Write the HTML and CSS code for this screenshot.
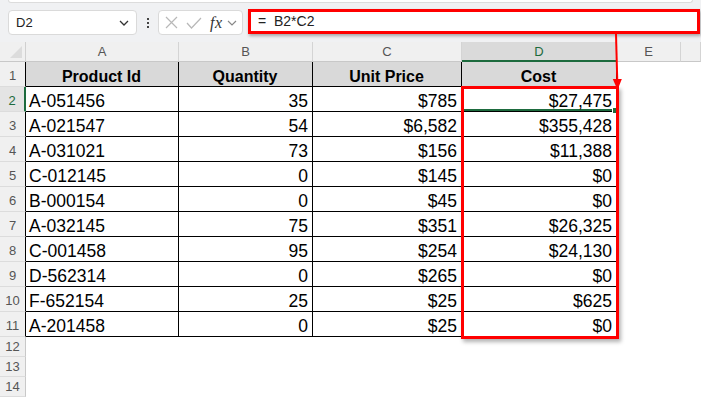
FILE: index.html
```html
<!DOCTYPE html>
<html lang="en">
<head>
    <meta charset="UTF-8">
    <meta name="viewport" content="width=device-width, initial-scale=1.0">
    <title>Cost = Quantity * Unit Price</title>
    <link rel="stylesheet" href="styles.css">
</head>
<body>
<div class="page">
    <div class="topbar">
        <div class="ribbon-edge"></div>
        <div class="formula-row">
            <div class="name-box">
                <span>D2</span>
                <svg class="chev" width="10" height="6" viewBox="0 0 10 6"><path d="M1 1 L5 5 L9 1" fill="none" stroke="#333" stroke-width="1.3"/></svg>
            </div>
            <div class="dots"><i></i><i></i><i></i></div>
            <div class="fx-box">
                <svg width="13" height="13" viewBox="0 0 13 13"><path d="M1 1 L12 12 M12 1 L1 12" stroke="#b8b8b8" stroke-width="1.2"/></svg>
                <svg width="16" height="12" viewBox="0 0 16 12"><path d="M1 6 L5.5 11 L15 1" fill="none" stroke="#b8b8b8" stroke-width="1.2"/></svg>
                <span class="fx">fx</span>
                <svg class="chev" width="10" height="6" viewBox="0 0 10 6"><path d="M1 1 L5 5 L9 1" fill="none" stroke="#888" stroke-width="1.2"/></svg>
            </div>
            <div class="formula">=&nbsp;&nbsp;B2*C2</div>
        </div>
    </div>

    <div class="sheet">
        <div class="corner"></div>
        <div class="ch">A</div>
        <div class="ch">B</div>
        <div class="ch">C</div>
        <div class="ch sel">D</div>
        <div class="ch">E</div>
        <div class="ch"></div>

        <div class="rh">1</div>
        <div class="c head">Product Id</div>
        <div class="c head">Quantity</div>
        <div class="c head">Unit Price</div>
        <div class="c head">Cost</div>
        <div class="e"></div><div class="e"></div>

        <div class="rh sel">2</div>
        <div class="c">A-051456</div>
        <div class="c num">35</div>
        <div class="c num">$785</div>
        <div class="c num active">$27,475</div>
        <div class="e"></div><div class="e"></div>

        <div class="rh">3</div>
        <div class="c">A-021547</div>
        <div class="c num">54</div>
        <div class="c num">$6,582</div>
        <div class="c num">$355,428</div>
        <div class="e"></div><div class="e"></div>

        <div class="rh">4</div>
        <div class="c">A-031021</div>
        <div class="c num">73</div>
        <div class="c num">$156</div>
        <div class="c num">$11,388</div>
        <div class="e"></div><div class="e"></div>

        <div class="rh">5</div>
        <div class="c">C-012145</div>
        <div class="c num">0</div>
        <div class="c num">$145</div>
        <div class="c num">$0</div>
        <div class="e"></div><div class="e"></div>

        <div class="rh">6</div>
        <div class="c">B-000154</div>
        <div class="c num">0</div>
        <div class="c num">$45</div>
        <div class="c num">$0</div>
        <div class="e"></div><div class="e"></div>

        <div class="rh">7</div>
        <div class="c">A-032145</div>
        <div class="c num">75</div>
        <div class="c num">$351</div>
        <div class="c num">$26,325</div>
        <div class="e"></div><div class="e"></div>

        <div class="rh">8</div>
        <div class="c">C-001458</div>
        <div class="c num">95</div>
        <div class="c num">$254</div>
        <div class="c num">$24,130</div>
        <div class="e"></div><div class="e"></div>

        <div class="rh">9</div>
        <div class="c">D-562314</div>
        <div class="c num">0</div>
        <div class="c num">$265</div>
        <div class="c num">$0</div>
        <div class="e"></div><div class="e"></div>

        <div class="rh">10</div>
        <div class="c">F-652154</div>
        <div class="c num">25</div>
        <div class="c num">$25</div>
        <div class="c num">$625</div>
        <div class="e"></div><div class="e"></div>

        <div class="rh">11</div>
        <div class="c">A-201458</div>
        <div class="c num">0</div>
        <div class="c num">$25</div>
        <div class="c num">$0</div>
        <div class="e"></div><div class="e"></div>

        <div class="rh short">12</div>
        <div class="e"></div><div class="e"></div><div class="e"></div><div class="e"></div><div class="e"></div><div class="e"></div>
        <div class="rh short">13</div>
        <div class="e"></div><div class="e"></div><div class="e"></div><div class="e"></div><div class="e"></div><div class="e"></div>
        <div class="rh short">14</div>
        <div class="e"></div><div class="e"></div><div class="e"></div><div class="e"></div><div class="e"></div><div class="e"></div>
    </div>

    <!-- annotation over the sheet -->
    <div class="highlight"></div>
    <svg class="arrow" width="701" height="100" viewBox="0 0 701 100">
        <path d="M616 34 L617.3 82" stroke="#f00" stroke-width="2"/>
        <polygon points="612.8,79 621.8,79 617.5,90" fill="#f00"/>
    </svg>
</div>
</body>
</html>
```

FILE: styles.css
```css
body {
    margin: 0;
    background: #fff;
    font-family: "Liberation Sans", Arial, sans-serif;
    color: #000;
}
.page {
    position: relative;
    width: 701px;
    height: 397px;
    overflow: hidden;
}
.topbar {
    height: 42px;
    background: #f0f1f3;
}
.ribbon-edge {
    height: 2px;
    margin: 0 8px;
    background: #fff;
    border: 1px solid #dcdcdc;
    border-top: none;
    border-radius: 0 0 5px 5px;
}
.formula-row {
    display: flex;
    align-items: flex-start;
    margin-top: 7px;
    padding-left: 8px;
}
.name-box {
    box-sizing: border-box;
    width: 129px;
    height: 25px;
    background: #fff;
    border: 1px solid #dadada;
    border-radius: 4px;
    display: flex;
    align-items: center;
    justify-content: space-between;
    padding: 0 7px 0 7px;
    font-size: 13px;
    color: #222;
}
.dots {
    width: 21px;
    height: 25px;
    display: flex;
    flex-direction: column;
    align-items: center;
    justify-content: center;
    gap: 2px;
}
.dots i {
    width: 2px;
    height: 2px;
    background: #444;
}
.fx-box {
    box-sizing: border-box;
    width: 85px;
    height: 25px;
    background: #fff;
    border: 1px solid #dadada;
    border-radius: 4px;
    display: flex;
    align-items: center;
    padding: 0 2px 0 6px;
    gap: 8px;
}
.fx-box .chev {
    margin-left: -4px;
}
.fx {
    font-family: "Liberation Serif", serif;
    font-style: italic;
    font-size: 16px;
    color: #333;
    letter-spacing: 0.5px;
}
.formula {
    box-sizing: border-box;
    width: 452px;
    height: 25px;
    margin-left: 5px;
    margin-top: -1px;
    background: #fff;
    border: 3px solid #f00;
    box-shadow: 1px 2px 3px rgba(0, 0, 0, 0.3);
    padding-left: 7px;
    font-size: 14px;
    line-height: 19px;
    color: #222;
}

.sheet {
    display: grid;
    grid-template-columns: 26px 153px 134px 149px 155px 64px 1fr;
    grid-template-rows: 20px repeat(11, 25px) repeat(3, 20px);
}
.sheet > div {
    box-sizing: border-box;
}
.corner {
    background: #f0f0f0;
    border-right: 1px solid #d0d0d0;
    border-bottom: 1px solid #c8c8c8;
    position: relative;
}
.corner::after {
    content: "";
    position: absolute;
    right: 3px;
    bottom: 3px;
    border-left: 12px solid transparent;
    border-bottom: 12px solid #dcdcdc;
}
.ch {
    background: #f0f0f0;
    border-right: 1px solid #d4d4d4;
    border-bottom: 1px solid #c8c8c8;
    font-size: 13px;
    color: #555;
    text-align: center;
    line-height: 19px;
}
.ch.sel {
    background: #dadada;
    color: #1d6b3e;
    border-bottom: 2px solid #1d6b3e;
}
.rh {
    background: #f0f0f0;
    border-right: 1px solid #000;
    border-bottom: 1px solid #dcdcdc;
    font-size: 13px;
    color: #555;
    text-align: center;
    display: flex;
    align-items: flex-end;
    justify-content: center;
    padding-bottom: 3px;
}
.rh.sel {
    color: #1d6b3e;
    background: #e4e4e4;
    border-right: 2px solid #1d6b3e;
}
.rh.short {
    border-right-color: #c8c8c8;
    padding-bottom: 2px;
}
.c {
    border-right: 1px solid #000;
    border-bottom: 1px solid #000;
    font-size: 17.5px;
    line-height: 19px;
    display: flex;
    align-items: flex-end;
    padding: 0 4px 0 3px;
    white-space: nowrap;
}
.c.num {
    justify-content: flex-end;
}
.c.head {
    background: #d9d9d9;
    font-weight: bold;
    font-size: 16px;
    line-height: 18px;
    justify-content: center;
}
.c.active {
    position: relative;
    box-shadow: inset 0 -2px 0 #1d6b3e;
}
.c.active::after {
    content: "";
    position: absolute;
    right: -3px;
    bottom: -3px;
    width: 5px;
    height: 5px;
    background: #1d6b3e;
    border: 1px solid #fff;
}
.e {
    background: #fff;
}

.highlight {
    position: absolute;
    left: 461px;
    top: 86px;
    width: 158px;
    height: 253px;
    box-sizing: border-box;
    border: 3px solid #f00;
    box-shadow: 2px 3px 4px rgba(0, 0, 0, 0.3);
}
.arrow {
    position: absolute;
    left: 0;
    top: 0;
}
```
